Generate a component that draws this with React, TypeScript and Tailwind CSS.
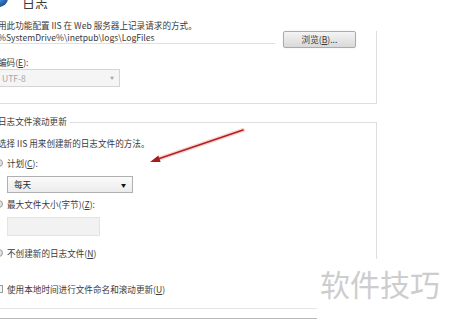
import React from 'react';

const font = { fontFamily: '"Noto Sans CJK SC", "Noto Sans", sans-serif' };

function Radio() {
  return <span className="shrink-0 w-[8px] h-[8px] -ml-[3px] rounded-full border border-[#9a9b9b] bg-gradient-to-br from-[#f0f0f0] to-[#dcdcdc]" />;
}

function Row({ children, className = '' }: { children: React.ReactNode; className?: string }) {
  return <div className={`h-[11px] flex items-center whitespace-nowrap ${className}`}>{children}</div>;
}

export default function App() {
  return (
    <div className="relative w-[450px] h-[320px] overflow-hidden bg-white text-[8.6px] leading-[11px] text-[#3a3a3a]" style={font}>
      <div className="-ml-[2px] w-[379px] flex flex-col">
        {/* header */}
        <div className="h-[9px] flex items-end overflow-hidden">
          <svg width="14" height="9" viewBox="0 0 14 9" className="shrink-0">
            <defs>
              <radialGradient id="g" cx="0.4" cy="0.3" r="0.8">
                <stop offset="0" stopColor="#9cc8ee" />
                <stop offset="0.6" stopColor="#2f74c0" />
                <stop offset="1" stopColor="#16427f" />
              </radialGradient>
            </defs>
            <circle cx="1" cy="-2" r="9" fill="url(#g)" />
          </svg>
          <span className="ml-[10px] text-[13px] leading-[12px] text-[#3a3a3a]">日志</span>
        </div>

        <Row className="mt-[11px]">用此功能配置 IIS 在 Web 服务器上记录请求的方式。</Row>

        {/* group 1 */}
        <div className="h-[73px] border-r border-b border-[#dedede] flex flex-col">
          <div className="h-[17px] flex items-start">
            <div className="w-[277px] h-[13px] border-b border-[#d8e2e8] flex items-center whitespace-nowrap">%SystemDrive%\inetpub\logs\LogFiles</div>
            <button className="ml-[8px] w-[73px] h-[17px] rounded-[2px] border border-[#ababab] bg-gradient-to-b from-[#f4f4f4] to-[#d9d9d9] text-[8.6px] text-[#3a3a3a] flex items-center justify-center shadow-[0_0_2px_rgba(0,0,0,0.08)]">
              浏览(<span className="underline">B</span>)...
            </button>
          </div>
          <Row className="mt-[9px]">编码(<span className="underline">E</span>):</Row>
          <div className="mt-[1px] w-[122px] h-[18px] border border-[#d4d4d4] bg-[#f5f5f5] flex items-center justify-between pl-[3px] pr-[5px] text-[#a6a6a6]">
            <span>UTF-8</span>
            <span className="text-[4px] leading-[4px]">▼</span>
          </div>
        </div>

        {/* group 2 */}
        <div className="mt-[12px] flex items-start">
          <Row>日志文件滚动更新</Row>
          <div className="flex-1 ml-[3px] mt-[5.5px] h-[6px] border-t border-r border-[#dedede]" />
        </div>
        <div className="border-r border-[#dedede] flex flex-col">
          <Row className="mt-[10px]">选择 IIS 用来创建新的日志文件的方法。</Row>
          <Row className="mt-[9px]">
            <Radio />
            <span className="ml-[4px]">计划(<span className="underline">C</span>):</span>
          </Row>
          <div className="mt-[7px] ml-[9px] w-[126px] h-[17px] border border-[#b0b0b0] bg-gradient-to-b from-[#fbfbfb] to-[#ececec] flex items-center justify-between pl-[6px] pr-[6px] text-[#2a2a2a]">
            <span>每天</span>
            <span className="text-[5px] leading-[5px] text-[#111]">▼</span>
          </div>
          <Row className="mt-[6px]">
            <Radio />
            <span className="ml-[4px]">最大文件大小(字节)(<span className="underline">Z</span>):</span>
          </Row>
          <div className="mt-[7px] ml-[9px] w-[93px] h-[19px] border border-[#e4e4e4] bg-[#f2f2f2]" />
          <Row className="mt-[12px]">
            <Radio />
            <span className="ml-[4px]">不创建新的日志文件(<span className="underline">N</span>)</span>
          </Row>
        </div>

        <Row className="mt-[25px]">
          <span className="shrink-0 w-[8px] h-[8px] -ml-[3px] border border-[#9a9b9b] bg-[#f4f4f4]" />
          <span className="ml-[4px]">使用本地时间进行文件命名和滚动更新(<span className="underline">U</span>)</span>
        </Row>

        <div className="mt-[13px] w-[319px] border-t border-[#e4e4e4]" />
        <div className="mt-[9px] w-[319px] border-t border-[#b8b8b8]" />
      </div>

      {/* red arrow annotation */}
      <svg className="absolute left-0 top-0" width="450" height="320" viewBox="0 0 450 320">
        <path d="M243 130 L158 159" stroke="#f4b8b8" strokeWidth="4" strokeLinecap="round" opacity="0.6" />
        <path d="M243 130 L158 159" stroke="#b3201f" strokeWidth="1.6" strokeLinecap="round" />
        <polygon points="150,162 158.4,155.5 160.6,162.1" fill="#a81c1c" />
      </svg>

      {/* watermark */}
      <div className="absolute left-[320px] top-[265px] text-[30px] leading-[36px] text-[#cdcdcd] whitespace-nowrap">软件技巧</div>
    </div>
  );
}
